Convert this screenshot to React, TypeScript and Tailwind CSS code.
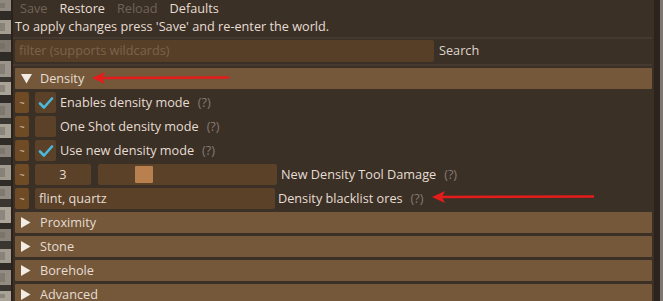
import React from "react";

const font = { fontFamily: '"Open Sans", "Noto Sans", sans-serif' };

interface RowProps {
  children: React.ReactNode;
}

const Tilde = () => (
  <div className="w-[14px] h-[21px] bg-[#6e4a25] rounded-[2px] flex items-center justify-center text-[9px] text-[#d9c9b5] shrink-0">
    ~
  </div>
);

const Help = () => <span className="text-[#857a6e] ml-[8px]">(?)</span>;

const Check = ({ on }: { on: boolean }) => (
  <div className="w-[21px] h-[21px] bg-[#5a4128] rounded-[2px] flex items-center justify-center shrink-0">
    {on && (
      <svg width="16" height="14" viewBox="0 0 16 14">
        <path d="M2 7.5 L6 11.5 L14 2.5" fill="none" stroke="#4cb8dc" strokeWidth="2.6" strokeLinecap="round" strokeLinejoin="round" />
      </svg>
    )}
  </div>
);

const Row: React.FC<RowProps> = ({ children }) => (
  <div className="flex items-center gap-[6px] h-[21px] shrink-0">{children}</div>
);

const Section = ({ title, open }: { title: string; open?: boolean }) => (
  <div className="h-[21px] shrink-0 bg-[#75583a] flex items-center pl-[6px] text-[#e6ddd3] rounded-[1px]">
    {open ? (
      <svg width="11" height="10" viewBox="0 0 11 10" className="mr-[8px]"><path d="M0 0 H11 L5.5 9.5 Z" fill="#f3ece4" /></svg>
    ) : (
      <svg width="10" height="11" viewBox="0 0 10 11" className="mr-[9px]"><path d="M0 0 V11 L9.5 5.5 Z" fill="#f3ece4" /></svg>
    )}
    <span>{title}</span>
  </div>
);

const stones = [
  [0, 11, "#8f897f"], [11, 9, "#2f2c28"], [20, 14, "#a39d92"], [34, 6, "#3a3631"],
  [40, 12, "#7f796f"], [52, 9, "#2f2c28"], [61, 16, "#9a948a"], [77, 5, "#3a3631"],
  [82, 13, "#aaa398"], [95, 8, "#2f2c28"], [103, 15, "#8d877d"], [118, 6, "#3a3631"],
  [124, 14, "#a7a196"], [138, 7, "#2f2c28"], [145, 12, "#8b857b"], [157, 8, "#3a3631"],
  [165, 15, "#a09a8f"], [180, 6, "#2f2c28"], [186, 13, "#918b81"], [199, 8, "#3a3631"],
  [207, 16, "#aba599"], [223, 6, "#2f2c28"], [229, 12, "#878177"], [241, 8, "#3a3631"],
  [249, 14, "#a29c91"], [263, 7, "#2f2c28"], [270, 15, "#928c82"], [285, 6, "#3a3631"],
  [291, 10, "#a8a297"],
] as const;

const Stone = () => (
  <svg width="11" height="301" className="shrink-0 block">
    {stones.map(([y, h, c], i) => (
      <rect key={i} x="0" y={y} width="11" height={h} fill={c} />
    ))}
    {stones.map(([y, h], i) =>
      h > 9 ? <rect key={"s" + i} x={i % 2 ? 6 : 0} y={y + 3} width="5" height={h - 6} fill="#6e685f" opacity="0.5" /> : null
    )}
  </svg>
);

const Arrow = ({ x, y, w }: { x: number; y: number; w: number }) => (
  <svg
    width={w}
    height="12"
    className="absolute"
    style={{ left: x, top: y - 6 }}
    viewBox={`0 0 ${w} 12`}
  >
    <path d={`M10 6 L${w} 5.5`} stroke="#e51c1c" strokeWidth="2.4" />
    <path d="M0 6 L13 0 L10 6 L13 12 Z" fill="#e51c1c" />
  </svg>
);

export default function App() {
  return (
    <div className="relative flex w-[663px] h-[301px] overflow-hidden bg-[#3b3026] text-[12.7px]" style={font}>
      <Stone />
      <div className="w-[2px] bg-[#2a221b] shrink-0" />
      <div className="flex-1 min-w-0 px-[2px] text-[#e6ddd3]">
        <div className="flex items-center h-[16px] leading-[16px] gap-[12px] pl-[5px]">
          <span className="text-[#6f6457]">Save</span>
          <span>Restore</span>
          <span className="text-[#6f6457]">Reload</span>
          <span>Defaults</span>
        </div>
        <div className="h-[21px] flex items-center pt-[1px]">To apply changes press 'Save' and re-enter the world.</div>
        <div className="h-[2px] bg-[#463a30] -ml-[2px]" />
        <div className="flex items-center gap-[5px] mt-[1px]">
          <div className="w-[419px] h-[22px] bg-[#573f27] rounded-[2px] flex items-center px-[4px] text-[#7a634b]">
            filter (supports wildcards)
          </div>
          <span className="text-[#ddd5cc]">Search</span>
        </div>
        <div className="h-[2px] bg-[#463a30] mt-[2px] -ml-[2px]" />
        <div className="mt-[2px]">
          <Section title="Density" open />
        </div>
        <div className="flex flex-col gap-[3px] mt-[3px]">
          <Row>
            <Tilde />
            <Check on />
            <span className="-ml-[2px]">Enables density mode<Help /></span>
          </Row>
          <Row>
            <Tilde />
            <Check on={false} />
            <span className="-ml-[2px]">One Shot density mode<Help /></span>
          </Row>
          <Row>
            <Tilde />
            <Check on />
            <span className="-ml-[2px]">Use new density mode<Help /></span>
          </Row>
          <Row>
            <Tilde />
            <div className="w-[56px] h-[21px] bg-[#5a4128] rounded-[2px] flex items-center justify-center">3</div>
            <div className="w-[179px] h-[21px] bg-[#5a4128] rounded-[2px] ml-[1px] flex items-center pl-[37px]">
              <div className="w-[18px] h-[17px] bg-[#b8804e] rounded-[1px]" />
            </div>
            <span className="ml-[-2px]">New Density Tool Damage<Help /></span>
          </Row>
          <Row>
            <Tilde />
            <div className="w-[240px] h-[21px] bg-[#5a4128] rounded-[2px] flex items-center px-[4px]">flint, quartz</div>
            <span className="ml-[-3px]">Density blacklist ores<Help /></span>
          </Row>
        </div>
        <div className="flex flex-col gap-[3px] mt-[3px]">
          <Section title="Proximity" />
          <Section title="Stone" />
          <Section title="Borehole" />
          <Section title="Advanced" />
        </div>
      </div>
      <div className="w-[6px] bg-[#2b231c] shrink-0" />
      <div className="w-[3px] bg-[#7c7770] shrink-0" />
      <Arrow x={92} y={78} w={137} />
      <Arrow x={432} y={197} w={162} />
    </div>
  );
}
